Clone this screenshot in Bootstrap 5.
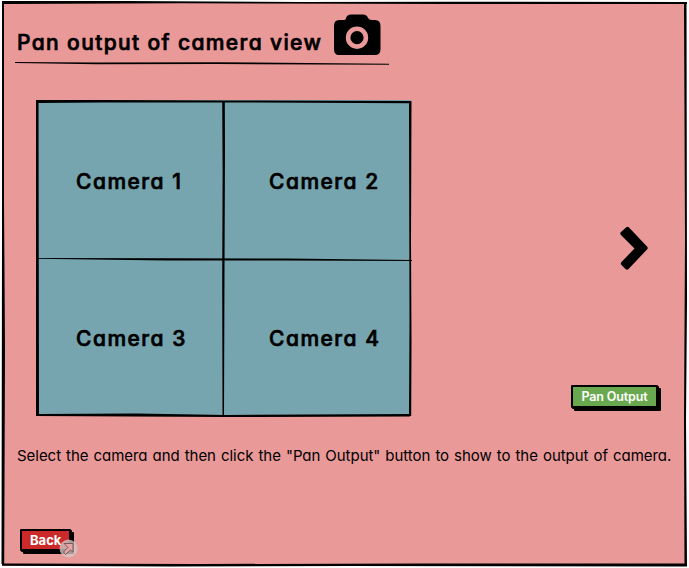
<!DOCTYPE html>
<html lang="en">
<head>
<meta charset="utf-8">
<meta name="viewport" content="width=device-width, initial-scale=1">
<title>Pan output of camera view</title>
<link href="https://cdn.jsdelivr.net/npm/bootstrap@5.3.0/dist/css/bootstrap.min.css" rel="stylesheet">
<style>
  body { background: #fcfcfc; color: #000; font-family: Inter, "Liberation Sans", sans-serif; font-feature-settings: "cv11"; }
  svg { display: block; flex: none; }
  .board { height: 568px; padding: 3px 4px 2px 3px; }
  .board-body { background: #ea9999; padding-left: 14px; }
  .ink { left: 0; top: 0; pointer-events: none; }
  .heading { font-size: 21px; line-height: 26px; font-weight: 500; letter-spacing: 1.38px; margin: 0; white-space: nowrap; -webkit-text-stroke: .7px #000; stroke-linejoin: round; }
  .title-row { height: 59px; padding-top: 11px; }
  .title-row .heading { width: 316px; padding-top: 16px; }
  .stage { height: 379px; padding-top: 35px; }
  .cameras { width: 375px; height: 316px; margin-left: 19px; background: #76a5af; }
  .feed { width: 187px; height: 157px; padding: 69px 0 0 40px; }
  .feed .heading { letter-spacing: 1.5px; }
  .feed-right { padding-left: 46px; }
  .side { width: 115px; height: 308px; padding-top: 126px; }
  .sketch-btn { border: 2px solid #000; border-radius: 1px; padding: 0; color: #fff; white-space: nowrap; }
  .pan-btn { width: 87px; height: 23px; margin-left: 1px; background: #6aa84f; box-shadow: 1px 1px 0 #000, 3px 3px 0 #000; font-size: 12.5px; line-height: 18px; font-weight: 600; letter-spacing: -.15px; }
  .back-btn { width: 51px; height: 22px; background: #cc2a2a; box-shadow: 1px 1px 0 #000, 3px 3px 0 #000; font-size: 13px; line-height: 17px; font-weight: 700; text-align: left; padding-left: 8px; }
  .back-slot { margin: auto 0 15px 3px; }
  .hint { font-size: 15px; line-height: 22px; letter-spacing: -.035px; word-spacing: .85px; white-space: nowrap; margin: 0; padding-top: 1px; }
  .link-mark { left: 39px; top: 10px; }
</style>
<script src="https://cdn.jsdelivr.net/npm/bootstrap@5.3.0/dist/js/bootstrap.bundle.min.js"></script>
</head>
<body>
<main class="board position-relative overflow-hidden">
  <div class="board-body h-100 d-flex flex-column">
    <header class="title-row d-flex align-items-start">
      <h1 class="heading">Pan output of camera view</h1>
      <svg width="48" height="42" viewBox="0 0 48 42" aria-hidden="true">
        <path fill-rule="evenodd" d="M6 6H10Q13 6 13 4Q14 .5 18 .5H30Q34 .5 35 4Q36 6 39 6H42Q47.500 6 47.500 12V35Q47.500 41 42 41H6Q1 41 1 35V12Q1 6 6 6ZM24 12.500A11.200 11.200 0 1 0 24 34.900A11.200 11.200 0 1 0 24 12.500ZM24 17.100A6.600 6.600 0 1 1 24 30.300A6.600 6.600 0 1 1 24 17.100Z"/>
      </svg>
    </header>
    <svg width="375" height="3" viewBox="0 0 375 3" overflow="visible" aria-hidden="true"><path d="M-2 0L80 .4L200 .3L372 1.700V2.800L200 2L80 2.200L-2 .9Z"/></svg>
    <section class="stage d-flex justify-content-between">
      <div class="cameras position-relative d-flex flex-wrap align-content-start">
        <div class="feed"><h2 class="heading">Camera 1</h2></div>
        <div class="feed feed-right"><h2 class="heading">Camera 2</h2></div>
        <div class="feed"><h2 class="heading">Camera 3</h2></div>
        <div class="feed feed-right"><h2 class="heading">Camera 4</h2></div>
        <svg class="ink position-absolute" width="376" height="317" viewBox="0 0 376 317" aria-hidden="true">
          <path d="M0 0L65 0L187 .5L375 1V3.200L187 2.500L65 2.500L2.500 3L3 314L100 313.500L190 315L374 314V316.500L190 317L0 316Z"/>
          <path d="M373 1H375.500L375 140L375.500 240L375.200 316H373L373.500 220Z"/>
          <path d="M186.200 1H188.800L189 50L188.500 170L188 315H186.500L186.200 180L186.600 70Z"/>
          <path d="M0 158L140 158.200L250 158.500L376 160V161L250 160.400L130 160.600L0 158.800Z"/>
        </svg>
      </div>
      <div class="side d-flex flex-column justify-content-between">
        <svg class="ms-5" width="34" height="46" viewBox="-2 0 34 46" aria-hidden="true"><path d="M1 6L6 1.500Q7.500 0 9 1.500L27 20.500Q28.500 22 27 23.500L8.500 43Q7 44.500 5.500 43L1.500 39Q0 37.500 1.500 36L14.500 22.500L1 9Q-.5 7.500 1 6Z"/></svg>
        <button class="sketch-btn pan-btn" type="button">Pan Output</button>
      </div>
    </section>
    <p class="hint">Select the camera and then click the "Pan Output" button to show to the output of camera.</p>
    <div class="back-slot position-relative">
      <button class="sketch-btn back-btn d-block" type="button">Back</button>
      <svg class="link-mark position-absolute" width="19" height="19" viewBox="0 0 19 19" aria-hidden="true">
        <circle cx="9.500" cy="9.500" r="9" fill="#d5c7c5" fill-opacity=".78"/>
        <path d="M5 4.500H14V13L11.500 11L6.500 15.500L4.500 13L9 8.500Z" fill="#e7a5a3" stroke="#765b5b" stroke-width="1"/>
      </svg>
    </div>
  </div>
  <svg class="ink position-absolute" width="689" height="568" viewBox="0 0 689 568" aria-hidden="true">
    <path d="M2 1L125 1L300 2L450 1.800L687 2V4L450 4L180 3.300L4 4Z"/>
    <path d="M2 1H4L4 200L5 350L4.200 564H1.500L2 250Z"/>
    <path d="M684 3H686.500L687 300L686 420L687 566H684.500L684 420L685 240Z"/>
    <path d="M2 563.500L200 564L420 563.500L687 563.500V566.500L350 566L170 566.500L2 565.800Z"/>
  </svg>
</main>
</body>
</html>
